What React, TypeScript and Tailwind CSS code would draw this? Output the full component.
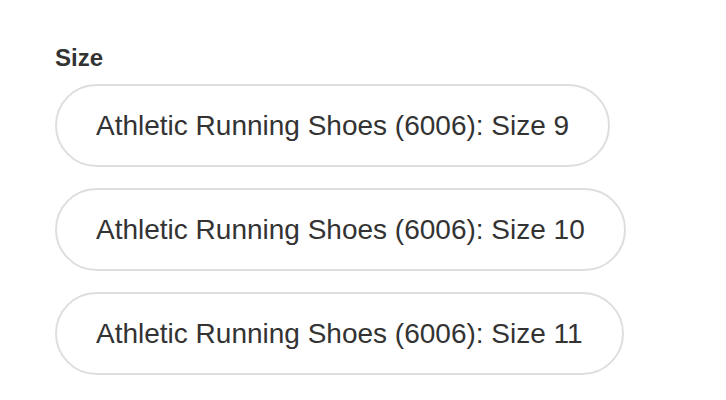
import React from "react";

const sizes = ["9", "10", "11"];

export default function App() {
  return (
    <div className="w-[726px] h-[400px] bg-white pl-[55px] pt-[44px]" style={{ fontFamily: '"Liberation Sans", Arial, sans-serif' }}>
      <div className="text-[24px] leading-[28px] font-bold text-[#333333]">Size</div>
      <div className="mt-[12px] flex flex-col items-start gap-[21px]">
        {sizes.map((s) => (
          <button
            key={s}
            className="h-[83px] px-[39px] flex items-center rounded-full border-2 border-[#dedede] bg-white text-[28px] text-[#333333]"
          >
            Athletic Running Shoes (6006): Size {s}
          </button>
        ))}
      </div>
    </div>
  );
}
